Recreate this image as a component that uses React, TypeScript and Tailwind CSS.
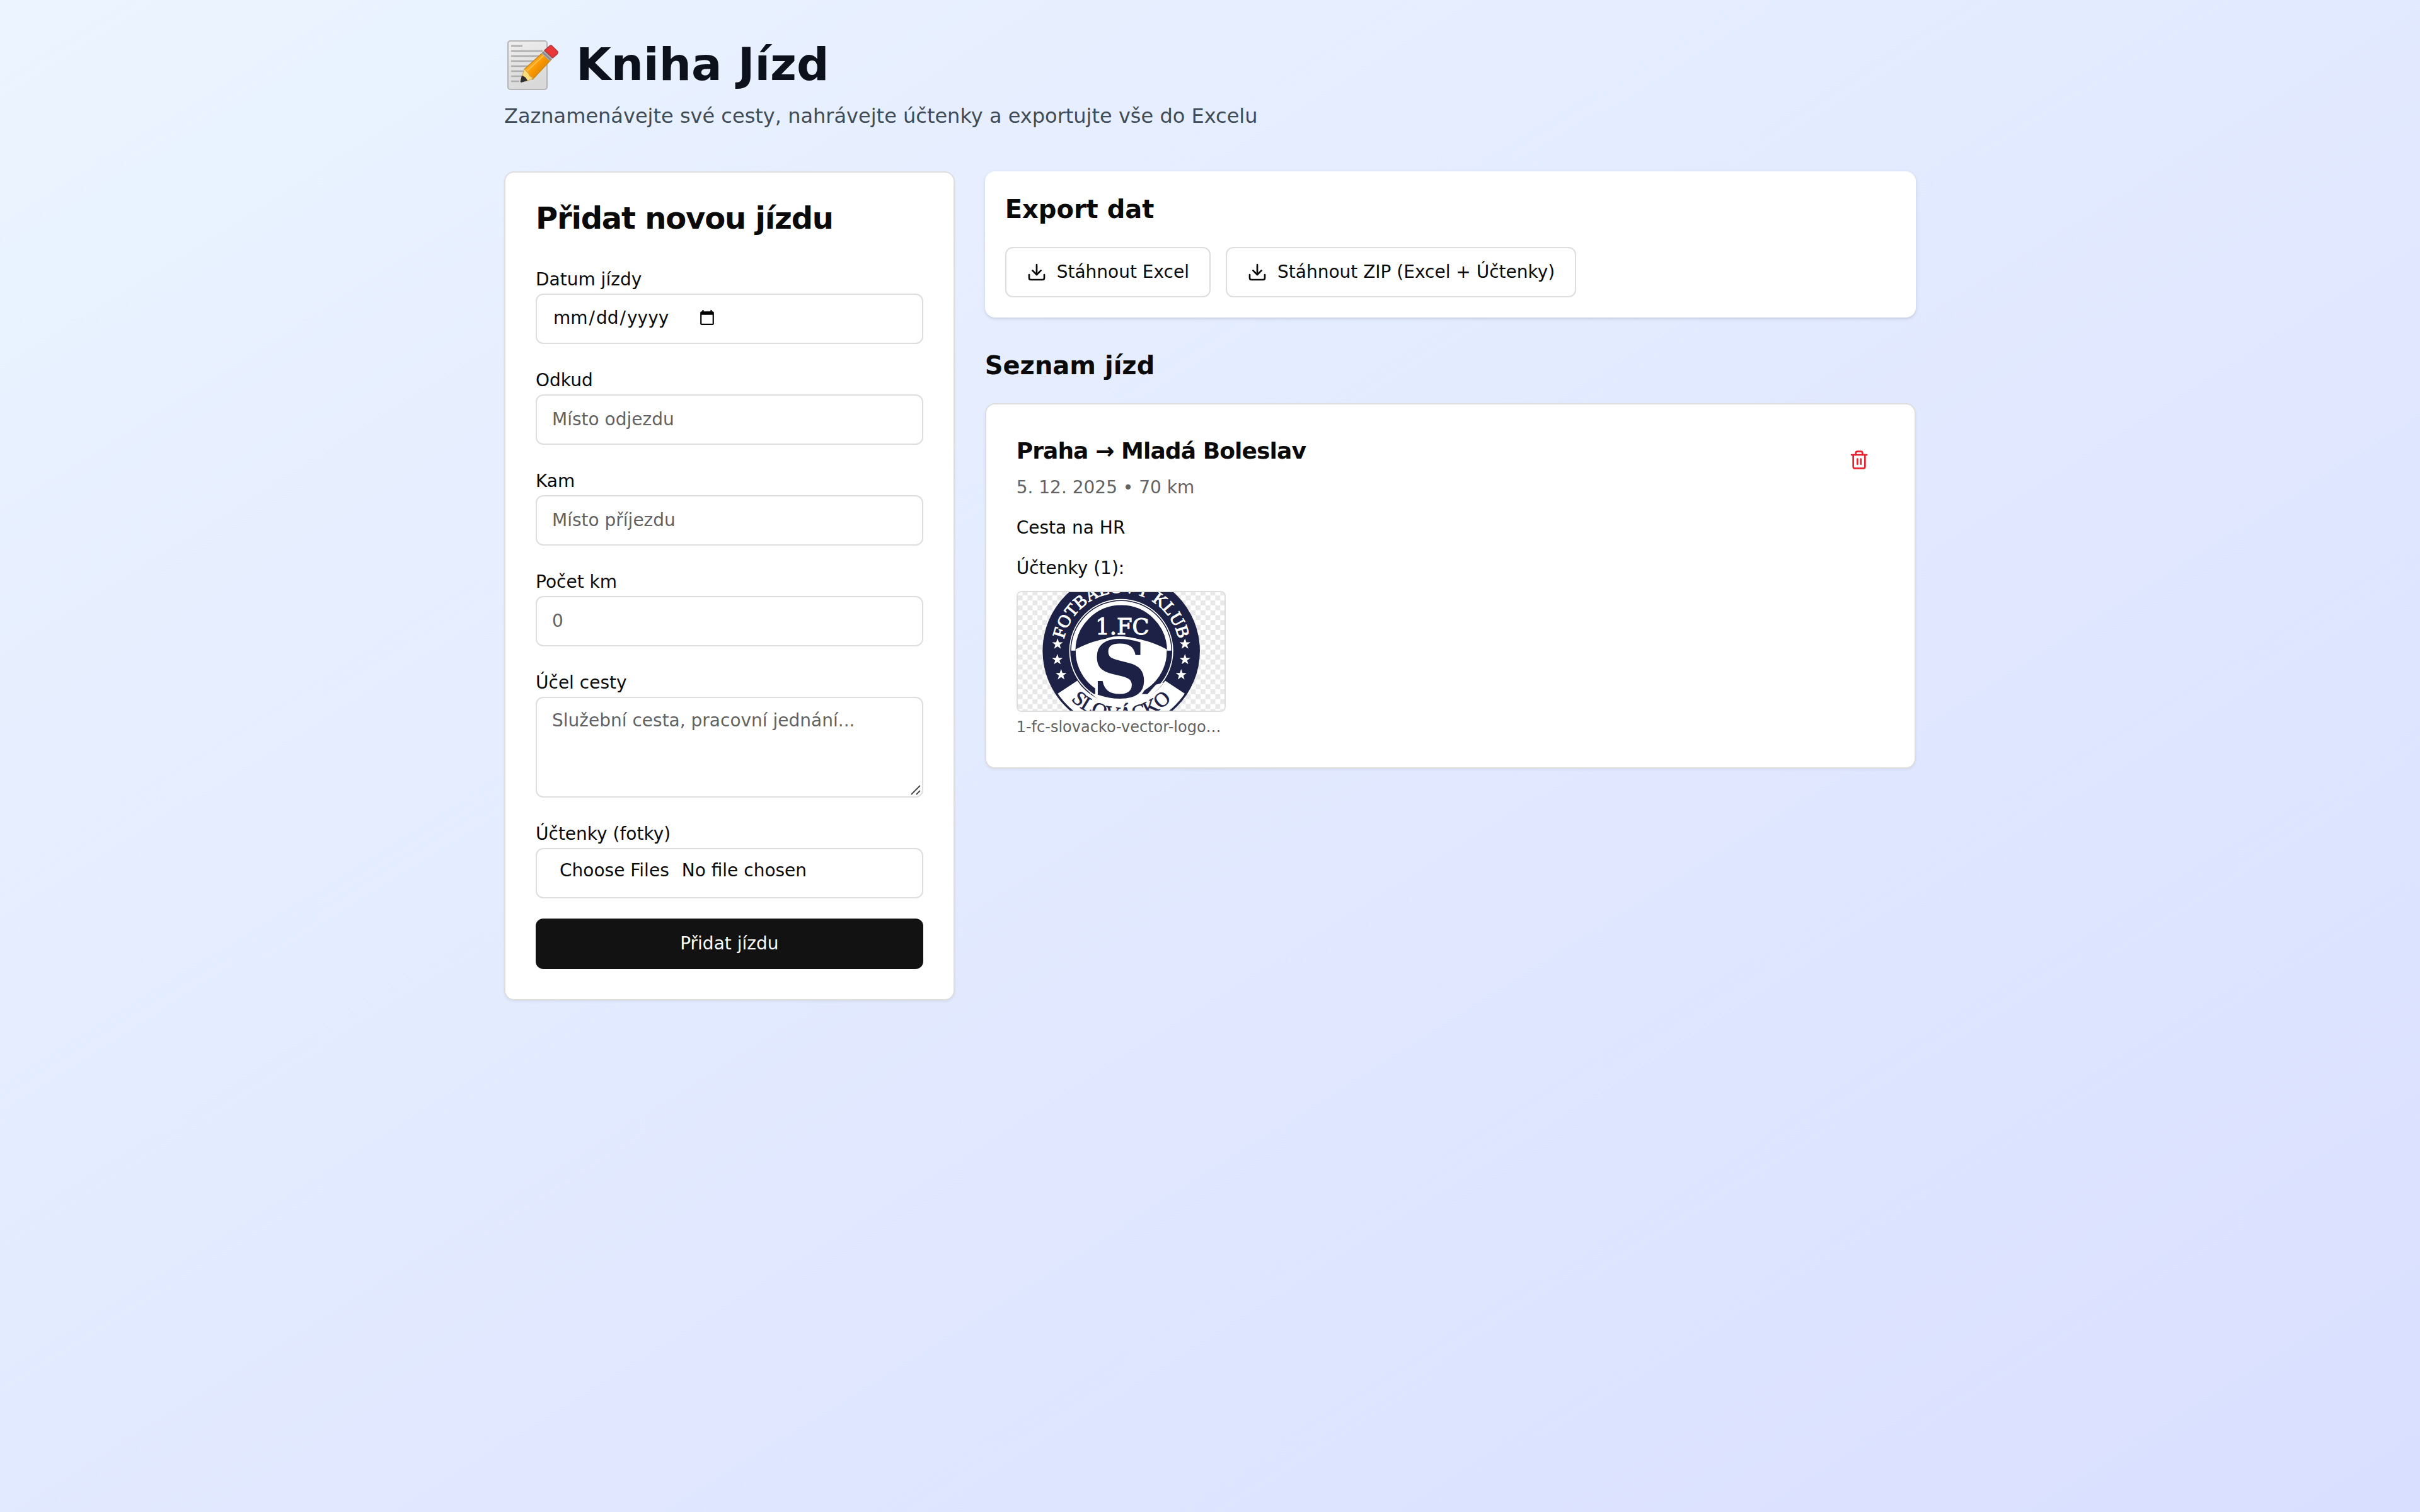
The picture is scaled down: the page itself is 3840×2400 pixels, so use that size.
import React from "react";
import { Download, Trash2 } from "lucide-react";

interface Receipt {
  id: number;
  name: string;
}

interface Trip {
  id: number;
  from: string;
  to: string;
  date: string;
  km: number;
  purpose: string;
  receipts: Receipt[];
}

const trips: Trip[] = [
  {
    id: 1,
    from: "Praha",
    to: "Mladá Boleslav",
    date: "5. 12. 2025",
    km: 70,
    purpose: "Cesta na HR",
    receipts: [{ id: 1, name: "1-fc-slovacko-vector-logo_1.png" }],
  },
];

const inputClass =
  "flex h-20 w-full rounded-xl border-2 border-[#dedede] bg-white px-6 pt-3.5 pb-4 text-[28px] leading-10 placeholder:text-[#636363] focus:outline-none";

const dateClass =
  "[&::-webkit-calendar-picker-indicator]:ml-2 [&::-webkit-datetime-edit-fields-wrapper]:p-0 [&::-webkit-datetime-edit-month-field]:px-0.5 [&::-webkit-datetime-edit-day-field]:px-0.5 [&::-webkit-datetime-edit-year-field]:px-0.5";

const outlineButtonClass =
  "inline-flex h-20 items-center justify-center gap-4 rounded-xl border-2 border-[#dedede] bg-white px-8 text-[28px] leading-10 whitespace-nowrap";

function Field({ id, label, children }: { id: string; label: string; children: React.ReactNode }) {
  return (
    <div className="text-[32px] leading-[48px]">
      <label htmlFor={id} className="text-[28px] leading-none">
        {label}
      </label>
      {children}
    </div>
  );
}

// sheet of paper with a pencil
function MemoIcon() {
  return (
    <svg viewBox="0 0 88 88" className="mb-1 size-[88px] shrink-0" aria-hidden="true">
      <defs>
        <linearGradient id="paper" x1="0" y1="0" x2="0.3" y2="1">
          <stop offset="0" stopColor="#efefef" />
          <stop offset="1" stopColor="#d9d9d9" />
        </linearGradient>
        <linearGradient id="pencil" gradientUnits="userSpaceOnUse" x1="44" y1="36" x2="58" y2="48">
          <stop offset="0" stopColor="#ffb42e" />
          <stop offset="0.5" stopColor="#ff9f0a" />
          <stop offset="1" stopColor="#ef9000" />
        </linearGradient>
      </defs>
      <rect x="6" y="7" width="62" height="77" rx="4" fill="url(#paper)" stroke="#b5b5b5" strokeWidth="2" />
      <path d="M11 15H29M11 23H61M11 31H58M11 39H52M11 47H46M11 55H40M11 63H34M11 71H24" stroke="#adadad" strokeWidth="2.6" />
      <path d="M32 52L63 24L75 36L45 68Q40 64 39 60Q34 58 32 52Z" fill="url(#pencil)" stroke="#c88413" strokeWidth="1.4" />
      <path d="M36 55L66 27" stroke="#ffc65c" strokeWidth="1.6" />
      <path d="M32 52L38 58Q40 64 46 66L38 70L26 72L29 61Z" fill="#fddc7c" stroke="#d2a94f" strokeWidth="1" />
      <path d="M28 62Q34 63 37 70L27 73Q25 72 26 70Z" fill="#2f2f2f" />
      <path d="M59 27L65 21L77 33L72 39Z" fill="#a9a9a9" />
      <path d="M61 25L74 37" stroke="#7e7e7e" strokeWidth="1.4" />
      <path d="M64 22L72 15Q74 13 76 15L85 24Q86 26 84 28L77 34Z" fill="#ea3838" stroke="#a83a3c" strokeWidth="1.4" />
    </svg>
  );
}

const STAR = "0,-27 6.5,-8.5 26,-8.5 10.5,3.5 16,22 0,11 -16,22 -10.5,3.5 -26,-8.5 -6.5,-8.5";

const stars = [
  [232, 307],
  [231, 381],
  [249, 453],
  [838, 307],
  [838, 381],
  [820, 453],
];

// 1.FC Slovácko club badge on a transparency checkerboard
function ClubBadge() {
  return (
    <svg viewBox="43 60 984 564" preserveAspectRatio="xMidYMid slice" className="block h-full w-full" role="img" aria-label="1.FC Slovácko">
      <defs>
        <pattern id="checker" x="19" y="52" width="47" height="47" patternUnits="userSpaceOnUse">
          <rect width="47" height="47" fill="#fff" />
          <rect width="23.5" height="23.5" fill="#e8e8e8" />
          <rect x="23.5" y="23.5" width="23.5" height="23.5" fill="#e8e8e8" />
        </pattern>
        <path id="arc-top" d="M257 340A278 278 0 0 1 813 340" />
        <path id="arc-bottom" d="M202 340A333 333 0 0 0 868 340" />
        <clipPath id="badge-upper">
          <rect x="285" y="80" width="500" height="258" />
        </clipPath>
        <clipPath id="badge-core">
          <circle cx="535" cy="340" r="217" />
        </clipPath>
      </defs>
      <rect x="43" y="60" width="984" height="564" fill="url(#checker)" />
      <circle cx="535" cy="340" r="374" fill="#1c2145" />
      <path d="M233 543L326 481A250 250 0 0 0 744 481L837 543A364 364 0 0 1 233 543Z" fill="#fff" />
      <circle cx="535" cy="340" r="245" fill="#1c2145" stroke="#fff" strokeWidth="5" />
      <circle cx="535" cy="340" r="228" fill="none" stroke="#fff" strokeWidth="20" clipPath="url(#badge-upper)" />
      <path d="M298 343Q535 207 772 343L752 340V600H318V340Z" fill="#fff" clipPath="url(#badge-core)" />
      <path d="M360 500L390 545H660L700 500L738 490Q650 600 535 600Q420 600 360 500Z" fill="#fff" />
      <g fontFamily="'DejaVu Serif', serif">
        <text x="540" y="262" textAnchor="middle" fontSize="106" fill="#fff" stroke="#fff" strokeWidth="3">
          1.FC
        </text>
        <text x="530" y="562" textAnchor="middle" fontSize="376" fontWeight="bold" fill="#1c2145" stroke="#fff" strokeWidth="24" paintOrder="stroke">
          S
        </text>
      </g>
      <g fontFamily="'Liberation Serif', serif">
        <text fontSize="84" fill="#fff" stroke="#fff" strokeWidth="3" textAnchor="middle">
          <textPath href="#arc-top" startOffset="50%">
            FOTBALOVÝ KLUB
          </textPath>
        </text>
        <text fontSize="98" fill="#1c2145" stroke="#1c2145" strokeWidth="2" textAnchor="middle">
          <textPath href="#arc-bottom" startOffset="50%">
            SLOVÁCKO
          </textPath>
        </text>
      </g>
      {stars.map(([x, y]) => (
        <polygon key={`${x}-${y}`} points={STAR} transform={`translate(${x} ${y})`} fill="#fff" />
      ))}
    </svg>
  );
}

function TripForm() {
  return (
    <section className="rounded-2xl border-2 border-[#dedede] bg-white p-12 shadow-[0_2px_4px_rgba(0,0,0,0.06)]">
      <h2 className="mb-12 text-5xl leading-none font-semibold tracking-tight">Přidat novou jízdu</h2>
      <form className="space-y-8" onSubmit={(e) => e.preventDefault()}>
        <Field id="date" label="Datum jízdy">
          <input id="date" type="date" className={`${inputClass} ${dateClass}`} />
        </Field>
        <Field id="from" label="Odkud">
          <input id="from" type="text" placeholder="Místo odjezdu" className={inputClass} />
        </Field>
        <Field id="to" label="Kam">
          <input id="to" type="text" placeholder="Místo příjezdu" className={inputClass} />
        </Field>
        <Field id="km" label="Počet km">
          <input id="km" type="number" placeholder="0" className={inputClass} />
        </Field>
        <Field id="purpose" label="Účel cesty">
          <div className="relative">
            <textarea
              id="purpose"
              placeholder="Služební cesta, pracovní jednání..."
              className="block h-40 w-full resize-none rounded-xl border-2 border-[#dedede] bg-white px-6 py-4 text-[28px] leading-10 placeholder:text-[#636363] focus:outline-none"
            />
            <svg className="pointer-events-none absolute right-1 bottom-1 size-4" viewBox="0 0 16 16" stroke="#444" strokeWidth="1.8" aria-hidden="true">
              <path d="M1 15L15 1M9 15L15 9" />
            </svg>
          </div>
        </Field>
        <Field id="receipts" label="Účtenky (fotky)">
          <input id="receipts" type="file" multiple className={`${inputClass} file:mr-2 file:border-0 file:bg-transparent file:px-3`} />
        </Field>
        <button type="submit" className="flex h-20 w-full items-center justify-center rounded-xl bg-[#121212] text-[28px] leading-10 text-[#fafafa]">
          Přidat jízdu
        </button>
      </form>
    </section>
  );
}

function ExportPanel() {
  return (
    <section className="rounded-2xl bg-white p-8 shadow-[0_2px_6px_rgba(0,0,0,0.1),0_2px_4px_-2px_rgba(0,0,0,0.1)]">
      <h2 className="mb-8 text-[40px] leading-[56px] font-semibold">Export dat</h2>
      <div className="flex flex-wrap gap-6">
        <button type="button" className={outlineButtonClass}>
          <Download className="size-8" />
          Stáhnout Excel
        </button>
        <button type="button" className={outlineButtonClass}>
          <Download className="size-8" />
          Stáhnout ZIP (Excel + Účtenky)
        </button>
      </div>
    </section>
  );
}

function TripCard({ trip }: { trip: Trip }) {
  return (
    <article className="rounded-2xl border-2 border-[#dedede] bg-white p-12 text-[28px] leading-10 shadow-[0_2px_4px_rgba(0,0,0,0.06)]">
      <div className="flex items-start justify-between pb-6">
        <div className="space-y-3">
          <h3 className="text-4xl leading-[52px] font-semibold tracking-tight">
            {trip.from} → {trip.to}
          </h3>
          <p className="text-[#636363]">
            {trip.date} • {trip.km} km
          </p>
        </div>
        <button type="button" aria-label="Smazat jízdu" className="flex size-20 items-center justify-center rounded-xl text-[#e7222e]">
          <Trash2 className="size-8" />
        </button>
      </div>
      <p className="mb-6">{trip.purpose}</p>
      <p className="mb-4">Účtenky ({trip.receipts.length}):</p>
      <div className="grid grid-cols-4 gap-4">
        {trip.receipts.map((r) => (
          <div key={r.id} className="min-w-0">
            <div className="h-48 overflow-hidden rounded-lg border-2 border-[#dedede]">
              <ClubBadge />
            </div>
            <p className="mt-2 truncate text-2xl text-[#636363]">{r.name}</p>
          </div>
        ))}
      </div>
    </article>
  );
}

export default function App() {
  return (
    <div className="min-h-screen bg-linear-to-br from-[#ebf4ff] to-[#d9dfff] font-['DejaVu_Sans',sans-serif] text-[#0a0a0a]">
      <div className="mx-auto max-w-[2304px] px-8 py-16">
        <header className="mb-16">
          <h1 className="mb-4 flex h-20 items-center gap-[26px] text-7xl leading-[76px] font-bold text-[#0d111c]">
            <MemoIcon />
            <span className="pb-1">Kniha Jízd</span>
          </h1>
          <p className="text-[32px] leading-[48px] text-[#414c59]">Zaznamenávejte své cesty, nahrávejte účtenky a exportujte vše do Excelu</p>
        </header>
        <main className="grid grid-cols-1 items-start gap-12 lg:grid-cols-3">
          <TripForm />
          <div className="space-y-12 lg:col-span-2">
            <ExportPanel />
            <section>
              <h2 className="mb-8 text-[40px] leading-[56px] font-semibold">Seznam jízd</h2>
              {trips.map((trip) => (
                <TripCard key={trip.id} trip={trip} />
              ))}
            </section>
          </div>
        </main>
      </div>
    </div>
  );
}
